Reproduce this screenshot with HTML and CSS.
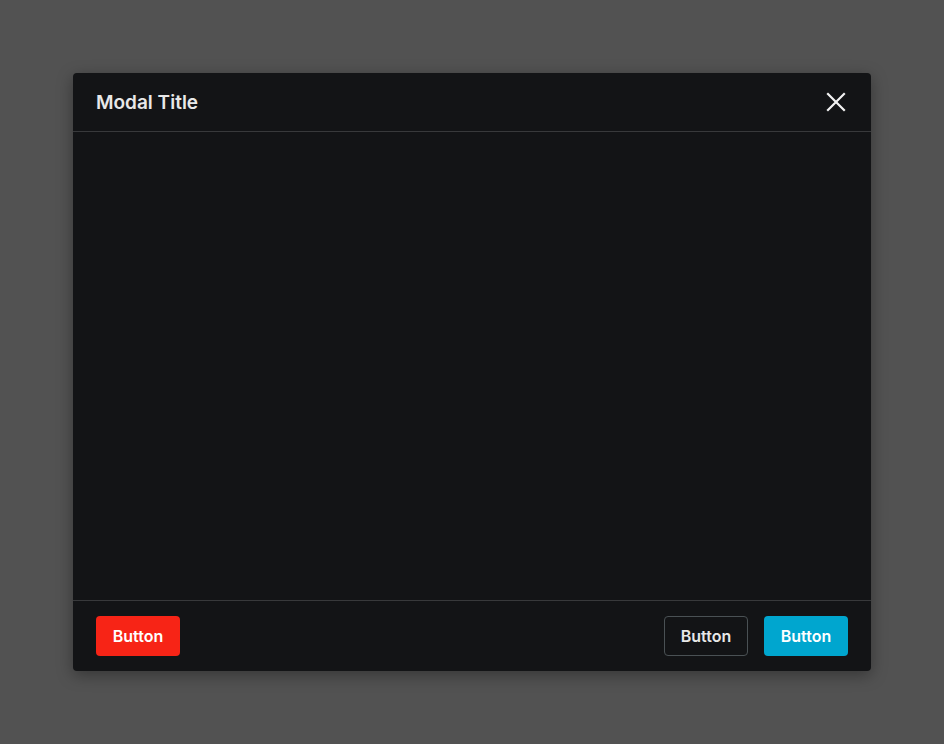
FILE: index.html
```html
<!DOCTYPE html>
<html>
<head>
<meta charset="utf-8">
<link rel="stylesheet" href="styles.css">
</head>
<body>
<div class="backdrop">
  <div class="modal">
    <div class="modal-header">
      <h2 class="modal-title">Modal Title</h2>
      <button class="close" aria-label="Close">
        <svg width="24" height="24" viewBox="0 0 24 24" fill="none" stroke="#f2f2f2" stroke-width="2.2" stroke-linecap="square">
          <path d="M4 4L20 20M20 4L4 20"/>
        </svg>
      </button>
    </div>
    <div class="modal-body"></div>
    <div class="modal-footer">
      <button class="btn btn-danger">Button</button>
      <div class="actions">
        <button class="btn btn-outline">Button</button>
        <button class="btn btn-primary">Button</button>
      </div>
    </div>
  </div>
</div>
</body>
</html>
```
FILE: styles.css
```css
* { box-sizing: border-box; }
html, body { margin: 0; height: 100%; }
body {
  background: #525252;
  font-family: Inter, sans-serif;
}
.backdrop {
  height: 100%;
  display: flex;
  align-items: center;
  justify-content: center;
}
.modal {
  width: 798px;
  height: 598px;
  background: #131416;
  border-radius: 4px;
  box-shadow: 0 4px 16px rgba(0,0,0,0.35);
  display: flex;
  flex-direction: column;
}
.modal-header {
  height: 59px;
  border-bottom: 1px solid #38393b;
  display: flex;
  align-items: center;
  justify-content: space-between;
  padding: 0 23px 0 23px;
}
.modal-title {
  margin: 0;
  font-family: Inter, sans-serif;
  font-size: 19px;
  font-weight: 600;
  color: #e8e8e8;
}
.close {
  background: none;
  border: 0;
  padding: 0;
  width: 24px;
  height: 24px;
  display: flex;
  cursor: pointer;
}
.modal-body { flex: 1; }
.modal-footer {
  height: 71px;
  border-top: 1px solid #38393b;
  display: flex;
  align-items: center;
  justify-content: space-between;
  padding: 0 23px;
}
.actions { display: flex; gap: 16px; }
.btn {
  height: 40px;
  width: 84px;
  padding: 0;
  border-radius: 4px;
  border: 1px solid transparent;
  font-family: Inter, sans-serif;
  font-size: 16px;
  font-weight: 600;
  color: #fff;
  cursor: pointer;
}
.btn-danger { background: #f72416; }
.btn-outline { background: transparent; border-color: #4a5154; color: #e8e8e8; }
.btn-primary { background: #00a6cf; }
```
